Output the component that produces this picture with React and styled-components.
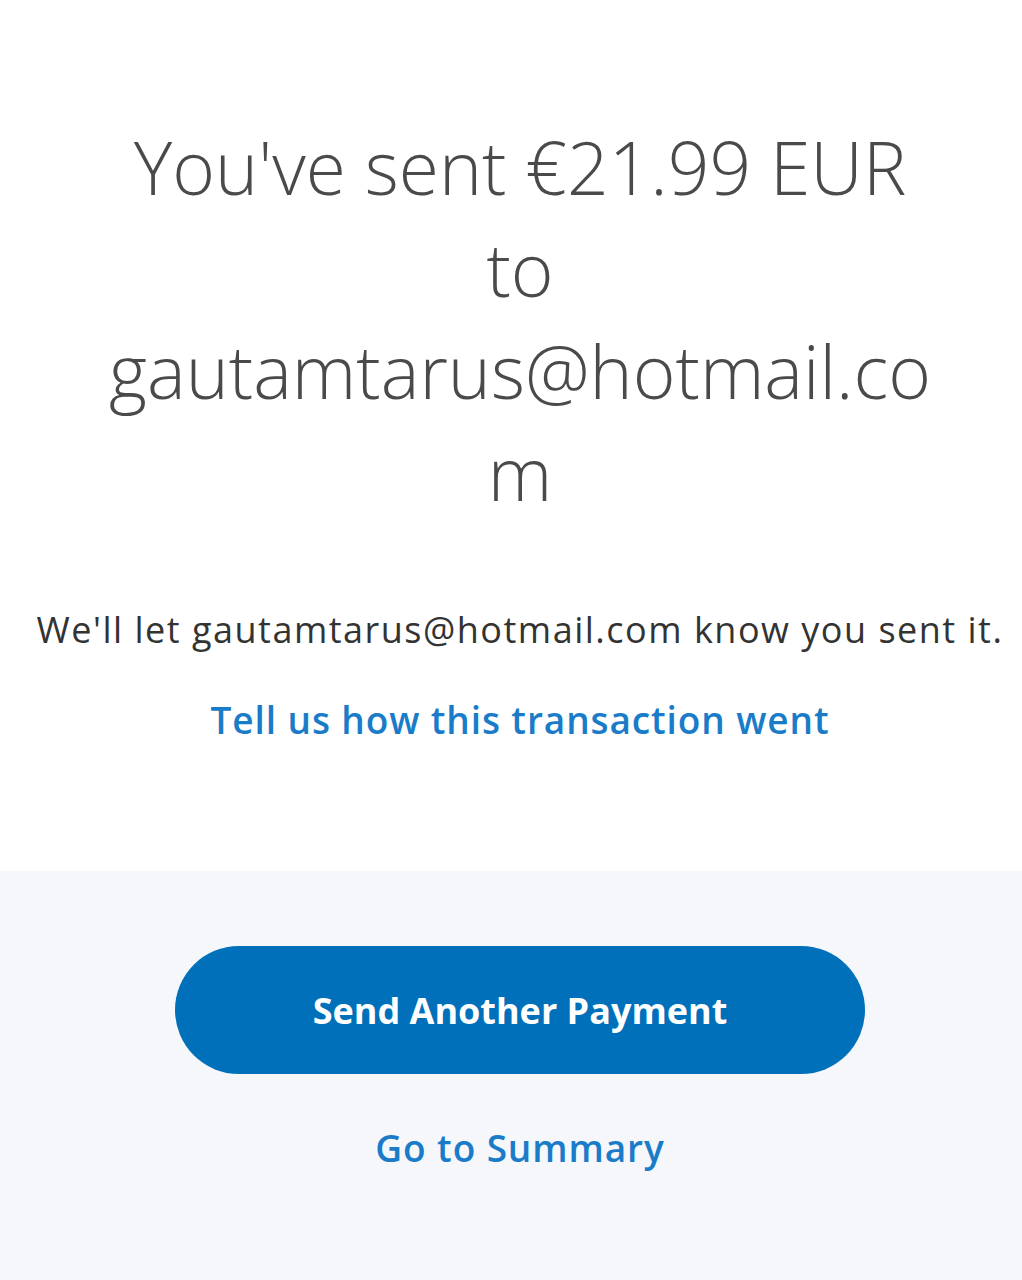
import React from "react";
import styled, { createGlobalStyle } from "styled-components";

const Global = createGlobalStyle`
  html, body { margin: 0; padding: 0; background: #ffffff; }
  body { font-family: "Open Sans", "Noto Sans", sans-serif; }
`;

const Page = styled.div`
  width: 1022px;
  min-height: 1280px;
  display: flex;
  flex-direction: column;
`;

const Top = styled.section`
  background: #ffffff;
  display: flex;
  flex-direction: column;
  align-items: center;
  padding: 116px 0 127px 18px;
`;

const Heading = styled.h1`
  margin: 0;
  width: 840px;
  text-align: center;
  font-family: "Open Sans", sans-serif;
  font-weight: 300;
  font-size: 73px;
  line-height: 102px;
  color: #4a4a4a;
  overflow-wrap: break-word;
  word-break: break-word;
`;

const Note = styled.p`
  margin: 82px 0 0;
  font-size: 36px;
  letter-spacing: 1.5px;
  line-height: 48px;
  color: #333333;
  text-align: center;
  white-space: nowrap;
`;

const TextLink = styled.a`
  display: block;
  margin-top: ${(p) => p.$top || 0}px;
  font-size: 37px;
  letter-spacing: 0.9px;
  line-height: 48px;
  font-weight: 600;
  color: #1a7cc9;
  text-decoration: none;
  text-align: center;
`;

const Bottom = styled.section`
  flex: 1;
  background: #f5f7fa;
  display: flex;
  flex-direction: column;
  align-items: center;
  padding: 75px 0 0 18px;
`;

const PrimaryButton = styled.button`
  width: 690px;
  height: 128px;
  border: none;
  border-radius: 64px;
  background: #0070ba;
  color: #ffffff;
  font-family: "Open Sans", sans-serif;
  font-weight: 700;
  font-size: 36px;
  cursor: pointer;
`;

export default function App() {
  return (
    <Page>
      <Global />
      <Top>
        <Heading>You've sent €21.99 EUR to gautamtarus@hotmail.com</Heading>
        <Note>We'll let gautamtarus@hotmail.com know you sent it.</Note>
        <TextLink href="#" $top={42}>Tell us how this transaction went</TextLink>
      </Top>
      <Bottom>
        <PrimaryButton>Send Another Payment</PrimaryButton>
        <TextLink href="#" $top={50}>Go to Summary</TextLink>
      </Bottom>
    </Page>
  );
}
